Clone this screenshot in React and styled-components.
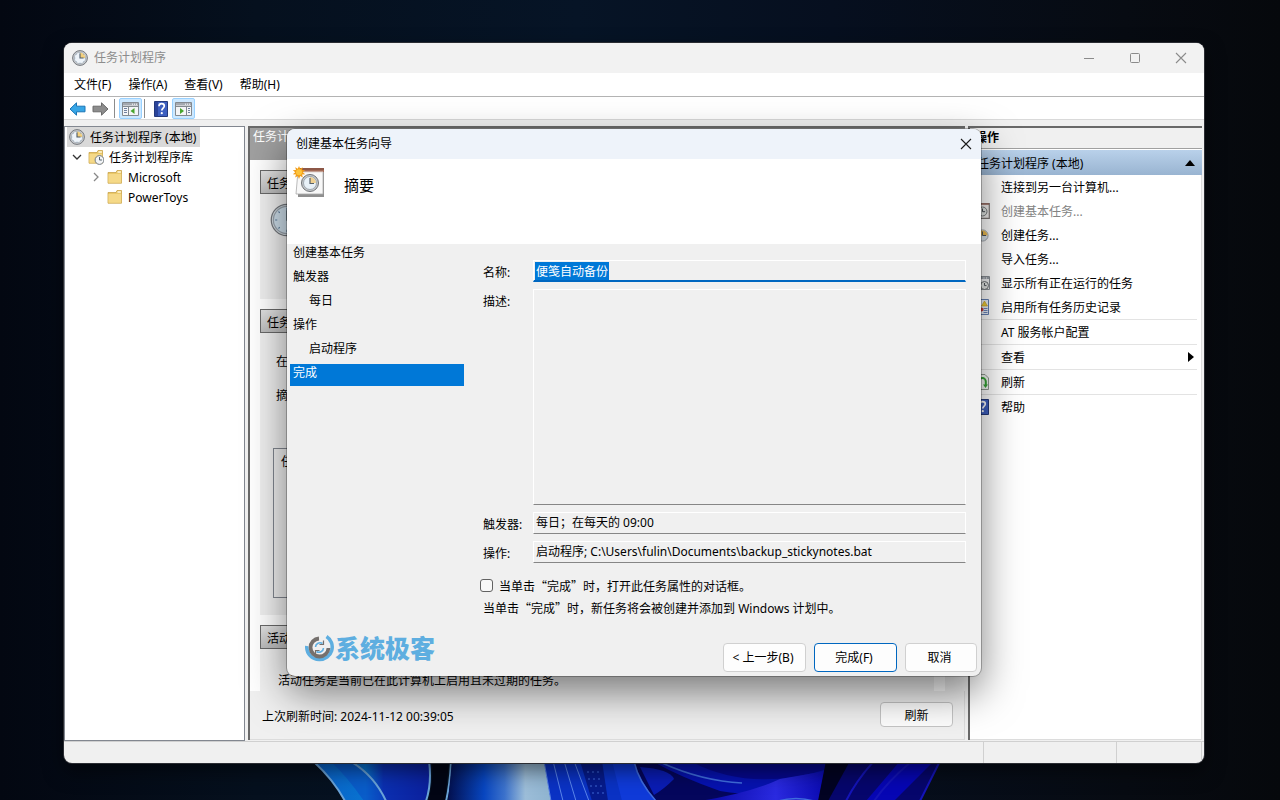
import React from 'react'
import styled, { createGlobalStyle } from 'styled-components'

const steps = [
  { text: '创建基本任务' },
  { text: '触发器' },
  { text: '每日', sub: true },
  { text: '操作' },
  { text: '启动程序', sub: true },
  { text: '完成', active: true },
]

/* ICONS */

const Clock = ({ size = 16, pale }) => (
  <svg width={size} height={size} viewBox="0 0 16 16">
    <circle cx="8" cy="8" r="7.4" fill={pale ? '#d5dde3' : '#c9ccd0'} stroke="#74787d" strokeWidth={pale ? '.6' : '1'} />
    <circle cx="8" cy="8" r={pale ? '6.4' : '5.7'} fill={pale ? '#cfe0ec' : '#eef4fa'} stroke="#9aa4ad" strokeWidth=".6" />
    {!pale && <path d="M8 2.6A5.4 5.4 0 0 1 13.4 8H8z" fill="#f3cf7c" />}
    <path d={pale ? 'M8 3.4V8h3.6' : 'M8 3.6V8h3.6'} fill="none" stroke="#4c5a68" strokeWidth={pale ? '.6' : '1.1'} />
    <path
      d="M8 2.4v1M8 12.6v1M2.4 8h1M12.6 8h1M4 4l.6.6M12 4l-.6.6M4 12l.6-.6M12 12l-.6-.6"
      stroke="#5f7f9e"
      strokeWidth=".5"
    />
  </svg>
)

const Folder = ({ clock }) => (
  <svg width="16" height="16" viewBox="0 0 16 16">
    <path d="M1 3.5h8l1-2h4.5v12.7H1z" fill="#e9c869" stroke="#c49b3c" strokeWidth=".7" />
    <path d="M10.5 2.2h3.4v1.6h-3.4z" fill="#fff6d8" />
    <path d="M1.4 5h12.8v8.8H1.4z" fill="#f5d988" />
    {clock && (
      <>
        <circle cx="11.5" cy="11" r="4.4" fill="#f2f4f6" stroke="#737b82" />
        <path d="M11.5 8v3h2.4" fill="none" stroke="#52606d" />
      </>
    )}
  </svg>
)

const Arrow = ({ color, edge, flip }) => (
  <svg width="17" height="16" viewBox="0 0 17 16">
    <path
      d={flip ? 'M16 8 9.5 1.8v3.4H1v5.6h8.5v3.4z' : 'M1 8l6.5-6.2v3.4H16v5.6H7.500v3.4z'}
      fill={color}
      stroke={edge}
      strokeLinejoin="round"
    />
  </svg>
)

const PaneIcon = ({ right }) => (
  <svg width="17" height="16" viewBox="0 0 17 16">
    <path d="M.5 1.5h16v13H.5z" fill="#f4f5f7" stroke="#83898f" />
    <path d="M1 2h15v2.5H1z" fill="#a4a9b0" />
    <path d="M10 3.2h1M12 3.2h1M14 3.2h1" stroke="#fff" />
    <path d="M1 5.5h15" stroke="#83898f" />
    <path d={right ? 'M11.5 5.5v9' : 'M6.5 5.5v9'} stroke="#83898f" />
    <path d={right ? 'M13 7.5h2M13 9.5h2M13 11.5h2' : 'M2 7.5h3M2 9.5h3M2 11.5h3'} stroke="#7080a0" />
    <path d={right ? 'M5 7l4 3-4 3z' : 'M12.5 7l-4 3 4 3z'} fill="#47a52d" />
  </svg>
)

const HelpIcon = () => (
  <svg width="16" height="16" viewBox="0 0 16 16">
    <path d="M1.5.5h13v15h-13z" fill="#3d5fc0" stroke="#24397c" />
    <path d="M2 1h3v14H2z" fill="#2b449a" />
    <path d="M6 5.2C6 3.4 7 2.7 8.6 2.7s2.7.8 2.7 2.4c0 2-2.5 2.100-2.5 4.400" fill="none" stroke="#fff" strokeWidth="1.7" />
    <circle cx="8.8" cy="12.2" r="1.1" fill="#fff" />
  </svg>
)

const TaskIcon = () => (
  <svg width="16" height="16" viewBox="0 0 16 16">
    <path d="M.7.7h14.6v14.6H.7z" fill="#f2efee" stroke="#7e7876" strokeWidth="1.2" />
    <path d="M1 1h14" stroke="#9c6a60" strokeWidth="1.5" />
    <circle cx="8.5" cy="8.5" r="4.5" fill="#e4e8e6" stroke="#75797a" />
    <path d="M8.5 5.5v3.2h2.6" fill="none" stroke="#454a50" />
  </svg>
)

const RunningIcon = () => (
  <svg width="16" height="16" viewBox="0 0 16 16">
    <path d="M.5 1.5h15v13H.5z" fill="#f3f4f5" stroke="#8b9097" />
    <path d="M1 3h14" stroke="#9ba1a9" strokeWidth="2" />
    <path d="M9.5 3h1M12 3h1" stroke="#fff" />
    <circle cx="10.5" cy="10.5" r="4" fill="#e7eae9" stroke="#707477" />
    <path d="M10.5 8v2.6h2M3 7l3 6" fill="none" stroke="#555b60" />
  </svg>
)

const HistoryIcon = () => (
  <svg width="16" height="16" viewBox="0 0 16 16">
    <path d="M1.5.5h13v15h-13z" fill="#edf2fb" stroke="#6580b4" />
    <path d="M10.500 2l3 5h-6z" fill="#f1ce36" stroke="#c79a18" strokeWidth=".6" />
    <path d="M9.500 9.500h4M9.500 11.500h4M9.500 13.500h4" stroke="#6c87bd" />
    <circle cx="7.500" cy="10.500" r="2" fill="#cc3b3b" />
  </svg>
)

const RefreshIcon = () => (
  <svg width="16" height="16" viewBox="0 0 16 16">
    <path d="M1.5.5H11l3.500 3.500v11.500h-13z" fill="#f6faf5" stroke="#939b93" />
    <path d="M5 9.500V7.500a3.400 3.400 0 0 1 6.800 0v4" fill="none" stroke="#37a637" strokeWidth="2" />
    <path d="M14 10.500l-2.500 3.500L9 10.500z" fill="#37a637" />
  </svg>
)

const NewClockIcon = () => (
  <svg width="16" height="16" viewBox="0 0 16 16">
    <circle cx="8.500" cy="8.500" r="5.600" fill="#dbe5ed" stroke="#a3a8ad" />
    <path d="M3.500 8.500a5 5 0 0 1 10 0z" fill="#f0bf52" />
    <path d="M8.500 4.500v4h3.500" fill="none" stroke="#4c5560" />
    <path d="M4 1l1 2.500L7.500 4 5 5 4 7.500 3 5 .5 4 3 3.500z" fill="#f4a81c" />
  </svg>
)

const WizardIcon = () => (
  <svg width="34" height="34" viewBox="0 0 34 34">
    <path d="M6 4h26v28H6z" fill="#8f8f8f" />
    <path d="M6 6h25v23H4z" fill="#f8f8f8" stroke="#aaa" strokeWidth=".8" />
    <path d="M6 3h26v4H6z" fill="#a36b58" />
    <path d="M6 4h26" stroke="#774536" />
    <path d="M6 7h25" stroke="#e0d5cf" />
    <circle cx="18" cy="18" r="8.5" fill="#c6c9cc" stroke="#6f7377" />
    <circle cx="18" cy="18" r="6.5" fill="#e8f1f8" stroke="#909aa3" strokeWidth=".8" />
    <path d="M18 12a6 6 0 0 1 6 6h-6z" fill="#efd091" />
    <path d="M18 13v5.500h4" fill="none" stroke="#56616b" strokeWidth="1.2" />
    <path d="M7 1l1.2 2.7 2.6-1.5-.8 2.900 3.200.2-2.500 2 2.500 1.900-3.200.3.9 2.900-2.700-1.400L7 14l-1.200-3-2.700 1.400.9-2.900L.8 9.200l2.500-1.900-2.500-2L4 5.100l-.8-2.900 2.600 1.500z" fill="#f19c17" />
    <circle cx="7" cy="7.300" r="3" fill="#fdc43c" />
  </svg>
)

const Logo = () => (
  <svg width="30" height="28" viewBox="0 0 30 28">
    <path d="M1.800 12A12.400 12.400 0 0 0 14.500 25.500A12.500 12.500 0 0 0 21.500 2.500" fill="none" stroke="#5eaee0" strokeWidth="3.500" />
    <path d="M14 4.500A9 9 0 1 0 23.500 14" fill="none" stroke="#75706d" strokeWidth="3.800" />
    <path d="M10.500 13a4.500 4.500 0 0 1 7-3.500M18.500 14a4.500 4.500 0 0 1-7 3.500" fill="none" stroke="#5eaee0" strokeWidth="1.600" />
    <path d="M18.500 6.500v4H14.500M10.500 20.500v-4h4" fill="none" stroke="#75706d" strokeWidth="1.200" />
  </svg>
)

const Cross = ({ size = 12, color = '#1b1b1b' }) => (
  <svg width={size} height={size} viewBox="0 0 12 12">
    <path d="M1 1l10 10M11 1L1 11" stroke={color} strokeWidth="1.1" />
  </svg>
)

const Wallpaper = () => (
  <WallpaperSvg viewBox="0 0 1280 40" preserveAspectRatio="none">
    <defs>
      <linearGradient id="petal">
        <stop offset="0" stopColor="#03104f" />
        <stop offset=".35" stopColor="#0846c0" />
        <stop offset=".55" stopColor="#3c72cc" />
        <stop offset=".75" stopColor="#9cbdd8" />
        <stop offset="1" stopColor="#8fb4d0" />
      </linearGradient>
      <linearGradient id="left">
        <stop offset="0" stopColor="#0a5fc8" />
        <stop offset=".45" stopColor="#0873d0" />
        <stop offset=".6" stopColor="#0b2fb0" />
        <stop offset="1" stopColor="#0b1f9c" />
      </linearGradient>
      <linearGradient id="glow" x1="0" x2="1">
        <stop offset="0" stopColor="#0606a0" />
        <stop offset=".6" stopColor="#2a2ae0" />
        <stop offset="1" stopColor="#0a0ab0" />
      </linearGradient>
    </defs>
    <path d="M312 0h118q3 20-5 40h-80Q332 16 312 0z" fill="url(#left)" />
    <path d="M350 0q24 14 36 40h-22Q346 14 330 0z" fill="#0a4fc4" opacity=".6" />
    <path d="M313 0q20 18 32 40M350 0q24 14 36 40M429 0q3 22-3 40M451 0q-1 24-5 40" fill="none" stroke="#6aa3d8" strokeWidth="2" />
    <path d="M432 0h17l-4 40h-17q6-20 4-40z" fill="#020514" />
    <path d="M452 0h92l7 40H448z" fill="url(#petal)" />
    <path d="M544 0h90l22 40H551z" fill="#0a32c4" />
    <path d="M544 0l7 40M553 0l10 40M564 0l12 40M574 0l15 40" stroke="#5b86ea" fill="none" />
    <path d="M580 0h22l6 40h-16z" fill="#061b8c" />
    <path d="M587 11h12M588 18h12M590 25h12M592 32h12" stroke="#3f69d4" strokeDasharray="2 3" />
    <path d="M612 0h22q6 22 22 40h-34z" fill="#0f3ad8" />
    <path d="M634 0h194l-8 40H656Q640 20 634 0z" fill="#04065c" />
    <path d="M652 0h176l-3 20Q780 40 720 30 680 16 652 0z" fill="#0612b0" />
    <path d="M690 0h138v8Q750 32 690 0z" fill="#05088c" />
    <path d="M640 6q30 2 34 12-10 10-20 16z" fill="#0a1cb4" />
    <path d="M700 40q50-8 80-22l46-8-6 30z" fill="url(#glow)" />
    <path d="M634 0q4 20 22 40M662 2q40 18 80 20M778 40q18-5 36 0" fill="none" stroke="#3f6cdc" strokeWidth="1.500" />
    <path d="M826 0h40l-22 40h-26z" fill="#020322" />
    <path d="M850 0h91l-21 40h-92z" fill="#06066c" />
    <path d="M900 0h34l-40 40h-28z" fill="#0606b4" />
    <path d="M874 0q-18 20-28 40M912 0q-24 20-38 40M940 0l-20 40" fill="none" stroke="#1414b8" strokeWidth="2" />
  </WallpaperSvg>
)

/* PAGE */

const App = () => (
  <Desktop>
    <GlobalStyle />
    <Wallpaper />
    <Window>
      <TitleBar>
        <Clock size={16} />
        <Title>任务计划程序</Title>
        <WindowButton aria-label="最小化">
          <svg width="12" height="12"><path d="M1 6.5h10" stroke="#8b8b8b" /></svg>
        </WindowButton>
        <WindowButton aria-label="最大化">
          <svg width="12" height="12"><rect x="1.5" y="1.5" width="9" height="9" rx="1" fill="none" stroke="#8b8b8b" /></svg>
        </WindowButton>
        <WindowButton aria-label="关闭"><Cross color="#8b8b8b" /></WindowButton>
      </TitleBar>
      <MenuBar>
        {['文件(F)', '操作(A)', '查看(V)', '帮助(H)'].map((item) => (
          <MenuButton key={item}>{item}</MenuButton>
        ))}
      </MenuBar>
      <Toolbar>
        <ToolButton aria-label="后退"><Arrow color="#38a6e6" edge="#1b75b5" /></ToolButton>
        <ToolButton aria-label="前进"><Arrow color="#8d8d8d" edge="#6b6b6b" flip /></ToolButton>
        <Divider />
        <ToolButton $on aria-label="显示控制台树"><PaneIcon /></ToolButton>
        <Divider />
        <ToolButton aria-label="帮助"><HelpIcon /></ToolButton>
        <ToolButton $on aria-label="显示操作窗格"><PaneIcon right /></ToolButton>
      </Toolbar>

      <Columns>
        <Tree>
          <TreeRow><TreeLabel $selected><Clock />任务计划程序 (本地)</TreeLabel></TreeRow>
          <TreeRow $level={1}>
            <Chevron viewBox="0 0 10 10"><path d="M1 3l4 4 4-4" stroke="#333" /></Chevron>
            <TreeLabel><Folder clock />任务计划程序库</TreeLabel>
          </TreeRow>
          <TreeRow $level={2}>
            <Chevron viewBox="0 0 10 10"><path d="M3 1l4 4-4 4" stroke="#888" /></Chevron>
            <TreeLabel><Folder />Microsoft</TreeLabel>
          </TreeRow>
          <TreeRow $level={2}>
            <Chevron viewBox="0 0 10 10" />
            <TreeLabel><Folder />PowerToys</TreeLabel>
          </TreeRow>
        </Tree>

        <Center>
          <CenterTitle>任务计</CenterTitle>
          <Groups>
            <Group $height={105}>
              <GroupTitle>任务</GroupTitle>
              <GroupBody><Clock size={34} pale /></GroupBody>
            </Group>
            <Group $height={282}>
              <GroupTitle>任务</GroupTitle>
              <GroupBody>
                <StatusLine>在</StatusLine>
                <StatusLine>摘</StatusLine>
                <StatusList>任</StatusList>
              </GroupBody>
            </Group>
            <Group $last>
              <GroupTitle>活动</GroupTitle>
              <ActiveNote>活动任务是当前已在此计算机上启用且未过期的任务。</ActiveNote>
              <ScrollEnd />
            </Group>
          </Groups>
          <CenterFooter>
            <span>上次刷新时间: 2024-11-12 00:39:05</span>
            <Refresh>刷新</Refresh>
          </CenterFooter>
        </Center>

        <Actions>
          <ActionsTitle>操作</ActionsTitle>
          <ActionsGroup>
            <span>任务计划程序 (本地)</span>
            <svg width="10" height="6"><path d="M5 0l5 6H0z" /></svg>
          </ActionsGroup>
          <Action><i />连接到另一台计算机...</Action>
          <Action disabled><TaskIcon />创建基本任务...</Action>
          <Action><NewClockIcon />创建任务...</Action>
          <Action><i />导入任务...</Action>
          <Action><RunningIcon />显示所有正在运行的任务</Action>
          <Action><HistoryIcon />启用所有任务历史记录</Action>
          <Line />
          <Action><i />AT 服务帐户配置</Action>
          <Line />
          <Action>
            <i />
            <span>查看</span>
            <svg width="6" height="10"><path d="M0 0l6 5-6 5z" /></svg>
          </Action>
          <Line />
          <Action><RefreshIcon />刷新</Action>
          <Line />
          <Action><HelpIcon />帮助</Action>
        </Actions>
      </Columns>

      <StatusBar>
        <StatusCell />
        <StatusCell $width={133} />
        <StatusCell $width={85} />
      </StatusBar>

      <Dialog role="dialog" aria-label="创建基本任务向导">
        <DialogTitle>
          <span>创建基本任务向导</span>
          <DialogClose aria-label="关闭"><Cross /></DialogClose>
        </DialogTitle>
        <DialogHeader>
          <WizardIcon />
          <h1>摘要</h1>
        </DialogHeader>
        <DialogBody>
          <Steps>
            {steps.map((step) => (
              <Step key={step.text} $sub={step.sub} $active={step.active}>{step.text}</Step>
            ))}
          </Steps>
          <Form>
            <Label htmlFor="name">名称:</Label>
            <NameField>
              <NameInput id="name" defaultValue="便笺自动备份" readOnly />
            </NameField>
            <Label htmlFor="desc">描述:</Label>
            <DescInput id="desc" readOnly />
            <Label htmlFor="trigger">触发器:</Label>
            <TextInput id="trigger" defaultValue="每日；在每天的 09:00" readOnly />
            <Label htmlFor="action">操作:</Label>
            <TextInput id="action" defaultValue="启动程序; C:\Users\fulin\Documents\backup_stickynotes.bat" readOnly />
            <CheckRow>
              <Checkbox id="open" type="checkbox" />
              <label htmlFor="open">当单击“完成”时，打开此任务属性的对话框。</label>
            </CheckRow>
            <Note><Cjk>当单击“完成”时，</Cjk>新任务将会被创建并添加到 Windows 计划中。</Note>
          </Form>
        </DialogBody>
        <DialogFooter>
          <Brand><Logo />系统极客</Brand>
          <Button $wide>&lt; 上一步(B)</Button>
          <Button $wide $primary>完成(F)</Button>
          <Button>取消</Button>
        </DialogFooter>
      </Dialog>
    </Window>
  </Desktop>
)

const GlobalStyle = createGlobalStyle`
  * {
    box-sizing: border-box;
  }
  body {
    margin: 0;
    background: #06101e;
  }
  body, button, input, textarea {
    font-family: 'Noto Sans', 'Noto Sans CJK SC', sans-serif;
    font-size: 12px;
    color: #000;
  }
  button {
    padding: 0;
    border: 0;
    background: none;
  }
  svg {
    display: block;
    flex: none;
  }
`

const Desktop = styled.div`
  position: relative;
  display: flex;
  min-height: 100vh;
  padding: 43px 76px 38px 64px;
  background: linear-gradient(90deg, #030711 0%, #05101e 20%, #061426 45%, #060f1f 65%, #070b12 88%, #06080c 100%);
`

const WallpaperSvg = styled.svg`
  position: absolute;
  left: 0;
  bottom: 0;
  width: 100%;
  height: 40px;
`

const Window = styled.main`
  position: relative;
  flex: 1;
  display: flex;
  flex-direction: column;
  min-width: 0;
  overflow: hidden;
  background: #f0f0f0;
  border-radius: 8px;
  box-shadow: 0 0 0 1px #2b2d33, 0 8px 20px rgba(0, 0, 0, 0.5);
`

const TitleBar = styled.header`
  display: flex;
  align-items: center;
  height: 30px;
  padding-left: 8px;
  background: #f2f2f2;
`

const Title = styled.span`
  flex: 1;
  margin-left: 6px;
  padding-bottom: 2px;
  color: #8c8c8c;
`

const WindowButton = styled.button`
  display: flex;
  align-items: center;
  justify-content: center;
  width: 46px;
  height: 30px;
`

const MenuBar = styled.nav`
  display: flex;
  gap: 17px;
  height: 24px;
  padding-left: 10px;
  background: #fff;
  border-bottom: 1px solid #b4b4b4;
`

const MenuButton = styled.button`
  line-height: 22px;
  white-space: nowrap;
`

const Toolbar = styled.div`
  display: flex;
  align-items: center;
  height: 23px;
  padding: 1px 0 0 2px;
  background: #fff;
  border-bottom: 1px solid #d9d9d9;
`

const ToolButton = styled.button`
  display: flex;
  align-items: center;
  justify-content: center;
  width: 23px;
  height: 21px;
  border: 1px solid ${(props) => (props.$on ? '#99d1ff' : 'transparent')};
  border-radius: 2px;
  background: ${(props) => (props.$on ? '#cce8ff' : 'none')};
`

const Divider = styled.span`
  width: 1px;
  height: 19px;
  margin: 0 4px 0 2px;
  background: #8c8c8c;
`

const Columns = styled.div`
  flex: 1;
  display: flex;
  gap: 3px;
  padding: 6px 2px 0 0;
`

const Tree = styled.aside`
  width: 181px;
  background: #fff;
  border: 1px solid #828790;
`

const TreeRow = styled.div`
  display: flex;
  align-items: center;
  gap: 4px;
  height: 20px;
  padding-left: ${(props) => (props.$level ? props.$level * 19 - 12 : 2)}px;
`

const TreeLabel = styled.span`
  display: flex;
  align-items: center;
  gap: 5px;
  height: 20px;
  padding: 0 4px 0 2px;
  white-space: nowrap;
  background: ${(props) => (props.$selected ? '#d9d9d9' : 'none')};
`

const Chevron = styled.svg`
  width: 10px;
  height: 10px;
  fill: none;
  stroke-width: 1.3;
`

const Center = styled.section`
  flex: 1;
  display: flex;
  flex-direction: column;
  min-width: 0;
  margin-bottom: 1px;
  border: solid #696969;
  border-width: 2px 0 0 2px;
  box-shadow: inset -1px -1px 0 #dcdcdc;
`

const CenterTitle = styled.div`
  height: 32px;
  padding: 0 3px;
  line-height: 18px;
  color: #fff;
  background: #a0a0a0;
`

const Groups = styled.div`
  flex: 1;
  display: flex;
  flex-direction: column;
  gap: 10px;
  padding: 10px 0 0 10px;
  background: #fff;
`

const Group = styled.div`
  position: relative;
  flex: ${(props) => (props.$last ? '1' : 'none')};
  background: #f0f0f0;

  & > div:nth-child(2) {
    min-height: ${(props) => props.$height}px;
  }
`

const GroupTitle = styled.div`
  height: 24px;
  padding-left: 6px;
  line-height: 26px;
  border: 1px solid #696969;
  background: linear-gradient(#e2e2e2, #bdbdbd);
`

const GroupBody = styled.div`
  padding: 9px 13px 17px;

  & > svg {
    margin-left: -3px;
  }
`

const StatusLine = styled.div`
  height: 34px;
  padding-left: 3px;
  line-height: 40px;
`

const StatusList = styled.div`
  height: 150px;
  margin-top: 38px;
  padding-left: 7px;
  line-height: 26px;
  border: 1px solid #828790;
`

const ActiveNote = styled.p`
  margin: 0;
  padding: 22px 18px 0;
  line-height: 20px;
`

const ScrollEnd = styled.span`
  position: absolute;
  right: 20px;
  bottom: 0;
  width: 11px;
  height: 40px;
  background: #fff;
`

const CenterFooter = styled.footer`
  display: flex;
  align-items: center;
  justify-content: space-between;
  height: 49px;
  padding: 0 12px;
`

const Refresh = styled.button`
  width: 73px;
  height: 25px;
  margin-bottom: 2px;
  background: #fdfdfd;
  border: 1px solid #c4c4c4;
  border-radius: 4px;
`

const Actions = styled.aside`
  width: 234px;
  margin-bottom: 1px;
  background: #fff;
  border: solid #696969;
  border-width: 2px 0 0 2px;
  box-shadow: inset -1px -1px 0 #dcdcdc;
`

const ActionsTitle = styled.div`
  height: 21px;
  padding-left: 5px;
  font-weight: bold;
  line-height: 20px;
  background: #f0f0f0;
  border-bottom: 1px solid #a0a0a0;
`

const ActionsGroup = styled.div`
  display: flex;
  align-items: center;
  justify-content: space-between;
  height: 26px;
  padding: 0 7px;
  background: linear-gradient(#b9d1ea, #99b4d1);
  border-top: 1px solid #fff;
`

const Action = styled.button`
  display: flex;
  align-items: center;
  gap: 11px;
  width: 100%;
  height: 24px;
  padding: 0 8px 0 4px;
  text-align: left;
  white-space: nowrap;
  color: ${(props) => (props.disabled ? '#838383' : '#000')};

  & > i {
    width: 16px;
  }
  & > span {
    flex: 1;
  }
`

const Line = styled.div`
  height: 1px;
  margin-right: 5px;
  background: #e3e3e3;
`

const StatusBar = styled.footer`
  display: flex;
  height: 22px;
  padding-right: 2px;
  border-top: 1px solid #d0d0d0;
`

const StatusCell = styled.div`
  flex: ${(props) => (props.$width ? `0 0 ${props.$width}px` : '1')};
  border-right: 1px solid #d0d0d0;
`

/* WIZARD */

const Dialog = styled.section`
  position: absolute;
  top: 86px;
  left: 223px;
  width: 694px;
  overflow: hidden;
  background: #f0f0f0;
  border-radius: 8px;
  box-shadow: 0 0 0 1px rgba(0, 0, 0, 0.25), 0 16px 40px rgba(0, 0, 0, 0.5);
`

const DialogTitle = styled.header`
  display: flex;
  align-items: center;
  justify-content: space-between;
  height: 30px;
  padding-left: 9px;
  background: #eef3fa;

  & > span {
    padding-bottom: 3px;
  }
`

const DialogClose = styled.button`
  display: flex;
  align-items: center;
  justify-content: center;
  width: 30px;
  height: 28px;
`

const DialogHeader = styled.div`
  display: flex;
  gap: 18px;
  height: 85px;
  padding: 6px 5px;
  background: #fff;

  h1 {
    margin: 10px 0 0;
    font-size: 15px;
    font-weight: normal;
    line-height: 20px;
  }
`

const DialogBody = styled.div`
  display: flex;
  padding: 0 15px 0 3px;
`

const Steps = styled.ul`
  width: 174px;
  margin: 0;
  padding: 0;
  list-style: none;
`

const Step = styled.li`
  height: 22px;
  margin-bottom: 2px;
  padding-left: ${(props) => (props.$sub ? 19 : 3)}px;
  line-height: 18px;
  color: ${(props) => (props.$active ? '#fff' : '#000')};
  background: ${(props) => (props.$active ? '#0078d7' : 'none')};
`

const Form = styled.div`
  flex: 1;
  display: grid;
  grid-template-columns: 50px 1fr;
  row-gap: 7px;
  margin-left: 19px;
  padding-top: 16px;
`

const Label = styled.label`
  padding-top: 4px;
  line-height: 18px;
  white-space: nowrap;
`

const NameField = styled.div`
  height: 22px;
  padding: 1px 1px 0;
  border: 1px solid #fff;
  border-bottom: 2px solid #0067c0;
`

const NameInput = styled.input`
  display: block;
  field-sizing: content;
  height: 18px;
  padding: 0 1px;
  color: #fff;
  background: #0078d7;
  border: 0;
  outline: 0;
`

const TextInput = styled.input`
  width: 100%;
  height: 22px;
  padding: 0 2px 2px;
  background: #f0f0f0;
  border: 1px solid #fff;
  border-bottom-color: #868686;
  outline: 0;
`

const DescInput = styled.textarea`
  display: block;
  width: 100%;
  height: 216px;
  background: #f0f0f0;
  border: 1px solid #fff;
  border-bottom-color: #868686;
  outline: 0;
  resize: none;
`

const Cjk = styled.span`
  font-family: 'Noto Sans CJK SC', sans-serif;
`

const CheckRow = styled.div`
  grid-column: 1 / -1;
  display: flex;
  align-items: center;
  gap: 6px;
  height: 18px;
  margin: 6px 0 0 -3px;
  font-family: 'Noto Sans CJK SC', sans-serif;
`

const Checkbox = styled.input`
  appearance: none;
  width: 13px;
  height: 13px;
  margin: 0;
  background: #f8f8f8;
  border: 1px solid #626262;
  border-radius: 3px;
`

const Note = styled.p`
  grid-column: 1 / -1;
  margin: -2px 0 0;
  line-height: 18px;
`

const DialogFooter = styled.footer`
  display: flex;
  align-items: center;
  gap: 8px;
  padding: 15px 4px 4px 18px;
`

const Brand = styled.div`
  flex: 1;
  display: flex;
  align-items: center;
  height: 39px;
  margin-top: -10px;
  font-size: 25px;
  font-weight: 900;
  line-height: 28px;
  color: #5eaee0;
`

const Button = styled.button`
  width: ${(props) => (props.$wide ? 83 : 72)}px;
  height: 29px;
  margin-top: 10px;
  padding: 0 3px 2px 0;
  background: #fdfdfd;
  border: 1px solid ${(props) => (props.$primary ? '#0067c0' : '#d0d0d0')};
  border-radius: 4px;
`

export default App
